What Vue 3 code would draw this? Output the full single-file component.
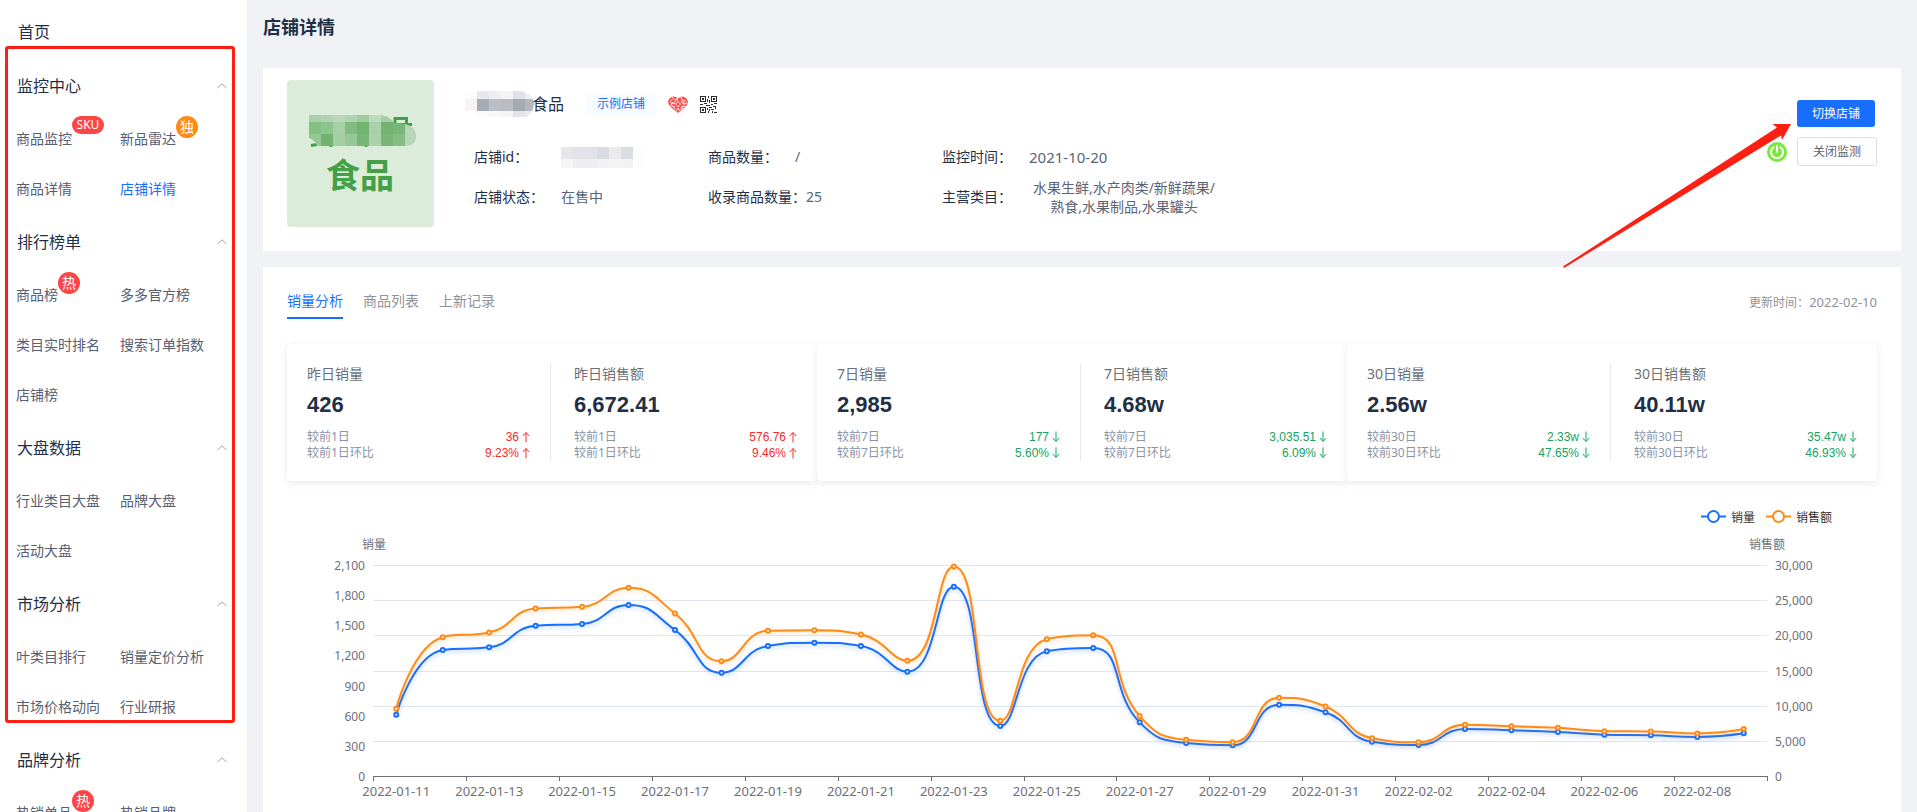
<script setup>
import { computed, onBeforeUnmount, onMounted, ref } from 'vue'

const menu = [
  {
    title: '监控中心',
    items: [
      { text: '商品监控', badge: 'SKU', kind: 'sku' },
      { text: '新品雷达', badge: '独', kind: 'solo' },
      { text: '商品详情' },
      { text: '店铺详情', active: true },
    ],
  },
  {
    title: '排行榜单',
    items: [
      { text: '商品榜', badge: '热', kind: 'hot' },
      { text: '多多官方榜' },
      { text: '类目实时排名' },
      { text: '搜索订单指数' },
      { text: '店铺榜' },
    ],
  },
  { title: '大盘数据', items: [{ text: '行业类目大盘' }, { text: '品牌大盘' }, { text: '活动大盘' }] },
  {
    title: '市场分析',
    items: [{ text: '叶类目排行' }, { text: '销量定价分析' }, { text: '市场价格动向' }, { text: '行业研报' }],
  },
  { title: '品牌分析', items: [{ text: '热销单品', badge: '热', kind: 'hot' }, { text: '热销品牌' }] },
]

const tabs = ['销量分析', '商品列表', '上新记录']
const activeTab = ref(0)

const stat = (name, value, period, diff, rate, up) => ({ name, value, period, diff, rate, up })
const statCards = [
  [
    stat('昨日销量', '426', '较前1日', '36', '9.23%', true),
    stat('昨日销售额', '6,672.41', '较前1日', '576.76', '9.46%', true),
  ],
  [
    stat('7日销量', '2,985', '较前7日', '177', '5.60%', false),
    stat('7日销售额', '4.68w', '较前7日', '3,035.51', '6.09%', false),
  ],
  [
    stat('30日销量', '2.56w', '较前30日', '2.33w', '47.65%', false),
    stat('30日销售额', '40.11w', '较前30日', '35.47w', '46.93%', false),
  ],
]

/* Pixelated masks: rows of [y, height, colours], 12px per cell */
const avatarMask = [
  [35, 7, ['#a9d0a9', '#b0d3b0', '#b9d8b9', '#b0d3b0', '#a0cba0', '#bddbbd', '#a6cfa6', '#dcecdb00', '#dcecdb00']],
  [42, 12, ['#85bf85', '#8dc38d', '#a6cfa6', '#80bb80', '#72b372', '#a9d1a9', '#72b372', '#78b678', '#b5d7b5']],
  [54, 12, ['#93c893', '#72b372', '#a3cfa3', '#96c796', '#78b678', '#aad3aa', '#78b678', '#85bd85', '#b5d7b5']],
]
const nameMask = [
  [0, 8, ['#fdfcfc', '#e6e8ee', '#eeeff2', '#f4f4f6', '#dfe2e9', '#eceef0']],
  [8, 12, ['#f7f2ef', '#a7acb4', '#bbbec4', '#b9bcc2', '#a5a9b2', '#b5b8bf']],
  [20, 6, ['#ffffff', '#fbfbfc', '#f7f7f8', '#f5f5f6', '#e3e4e8', '#e9eaed']],
]
const idMask = [
  [0, 12, ['#e8e6ea', '#e2e2e8', '#e2e3e9', '#d9dbe3', '#eaeaee', '#dcdce4', '#fbfcfc']],
  [12, 9, ['#f6f6f7', '#eeeef1', '#f0ecef', '#f1f1f4', '#f5f2f4', '#f2f2f4', '#fdfefd']],
]

/* Chart */
const chartBox = ref(null)
const width = ref(1590)
let observer
onMounted(() => {
  const measure = () => (width.value = chartBox.value.clientWidth)
  measure()
  observer = new ResizeObserver(measure)
  observer.observe(chartBox.value)
})
onBeforeUnmount(() => observer && observer.disconnect())

const TOP = 84
const BOTTOM = 295
const LEFT = 86
const right = computed(() => width.value - 110)
const band = computed(() => (right.value - LEFT) / 30)

const sales = [
  615, 1259, 1286, 1501, 1518, 1707, 1458, 1033, 1299, 1332, 1299, 1043, 1889, 503, 1246, 1279, 539, 333, 310, 714,
  639, 346, 314, 473, 460, 443, 416, 410, 393, 430,
]
const revenue = [
  9620, 19810, 20470, 23890, 24130, 26820, 23180, 16400, 20710, 20800, 20190, 16450, 29860, 7910, 19530, 20100, 8590,
  5210, 4880, 11180, 9950, 5450, 4880, 7350, 7160, 6920, 6450, 6400, 6120, 6740,
]
const scale = (list, max) =>
  list.map((v, i) => ({ x: LEFT + band.value * (i + 0.5), y: BOTTOM + 0.5 - (v / max) * (BOTTOM - TOP) }))

const clamp = (v, a, b) => Math.max(Math.min(v, Math.max(a, b)), Math.min(a, b))
function smoothPath(pts) {
  let d = `M${pts[0].x} ${pts[0].y}`
  let c0 = pts[0]
  for (let i = 1; i < pts.length; i++) {
    const prev = pts[i - 1]
    const p = pts[i]
    const next = pts[i + 1]
    let c1 = p
    let nextC0 = p
    if (next) {
      const lenPrev = Math.hypot(p.x - prev.x, p.y - prev.y)
      const lenNext = Math.hypot(next.x - p.x, next.y - p.y)
      const ratio = (0.5 * lenNext) / (lenNext + lenPrev)
      const nx = clamp(p.x + (next.x - prev.x) * ratio, next.x, p.x)
      const ny = clamp(p.y + (next.y - prev.y) * ratio, next.y, p.y)
      c1 = {
        x: clamp(p.x - ((nx - p.x) * lenPrev) / lenNext, prev.x, p.x),
        y: clamp(p.y - ((ny - p.y) * lenPrev) / lenNext, prev.y, p.y),
      }
      nextC0 = {
        x: p.x + ((p.x - c1.x) * lenNext) / lenPrev,
        y: p.y + ((p.y - c1.y) * lenNext) / lenPrev,
      }
    }
    d += `C${c0.x} ${c0.y} ${c1.x} ${c1.y} ${p.x} ${p.y}`
    c0 = nextC0
  }
  return d
}
const series = computed(() => [
  { key: 'blue', color: '#176eff', pts: scale(sales, 2100) },
  { key: 'orange', color: '#ff8a14', pts: scale(revenue, 30000) },
])
const leftTicks = Array.from({ length: 8 }, (_, i) => i * 300)
const rightTicks = Array.from({ length: 7 }, (_, i) => i * 5000)
const fmt = (n) => n.toLocaleString('en-US')
const dates = Array.from({ length: 15 }, (_, i) =>
  new Date(Date.UTC(2022, 0, 11 + i * 2)).toISOString().slice(0, 10),
)
</script>

<template>
  <div class="app">
    <aside class="sidebar">
      <a class="home" href="#">首页</a>
      <nav v-for="group in menu" :key="group.title" class="group">
        <button class="group-title" type="button">
          <span>{{ group.title }}</span>
          <svg class="chevron" viewBox="0 0 10 6" aria-hidden="true"><path d="M0.5 5 5 0.8 9.5 5" /></svg>
        </button>
        <ul class="items">
          <li v-for="item in group.items" :key="item.text">
            <a href="#" :class="{ active: item.active }">
              {{ item.text }}<span v-if="item.badge" class="badge" :class="item.kind">{{ item.badge }}</span>
            </a>
          </li>
        </ul>
      </nav>
      <div class="highlight" aria-hidden="true"></div>
    </aside>

    <main class="main">
      <h1>店铺详情</h1>

      <section class="card shop">
        <svg class="avatar" viewBox="0 0 147 147" role="img" aria-label="食品">
          <defs>
            <clipPath id="avatarClip">
              <path d="M22 35h72q9 1 13 8 14 0 19 5 5 6 2 14-4 4-10 4H30q-2-6-8-8z" />
            </clipPath>
          </defs>
          <rect width="147" height="147" fill="#dcecdb" />
          <g fill="none" stroke="#43a047" stroke-width="3">
            <path d="M108 38.5h11.500v6H108zM118 44.500h7M24 65.500l6-1M44 63v4M54 64v2M79 63v4" />
          </g>
          <g clip-path="url(#avatarClip)">
            <template v-for="row in avatarMask" :key="row[0]">
              <rect
                v-for="(c, i) in row[2]" :key="i" :x="22 + i * 12" :y="row[0]" width="12" :height="row[1]" :fill="c"
                shape-rendering="crispEdges"
              />
            </template>
          </g>
          <text x="73" y="108" class="avatar-text">食品</text>
        </svg>

        <div class="info">
          <div class="name-row">
            <svg class="name-mask" viewBox="0 0 69 26" aria-hidden="true">
              <defs>
                <clipPath id="nameClip"><path d="M0 4q0-4 4-4h52q11 2 13 12 0 9-7 14H12V20H0z" /></clipPath>
              </defs>
              <g clip-path="url(#nameClip)">
                <template v-for="row in nameMask" :key="row[0]">
                  <rect
                    v-for="(c, i) in row[2]" :key="i" :x="i * 12" :y="row[0]" width="12" :height="row[1]" :fill="c"
                    shape-rendering="crispEdges"
                  />
                </template>
              </g>
            </svg>
            <span class="name">食品</span>
            <span class="tag">示例店铺</span>
            <svg class="heart" viewBox="0 0 20 17" aria-hidden="true">
              <defs><clipPath id="heartClip"><path d="M10 17 2 10.500Q-1.500 6 1.500 2.500 5.500-1.500 10 2.500 14.500-1.500 18.500 2.500 21.500 6 18 10.500z" /></clipPath></defs>
              <g clip-path="url(#heartClip)">
                <rect width="20" height="17" fill="#fb5050" />
                <g stroke="#fff" stroke-width="1" fill="none" opacity=".85">
                  <path d="M4 1l3 3 3-1M2 6l4 2 1-3M1 10l4 0 2 3M9 1v4M13 1l1 3 4 1M19 7l-4 1-2-3M18 11l-4-1-1 4M8 15l2-3 2 3M4.500 3.500l-2 1M10 5.500l-2.500 2.500 2.500 3 2.500-3zM5 6l-2 3M15 5l2 4M7 11l-2-1M13 11l3 2" />
                </g>
                <rect x="9" y="7" width="2" height="2" fill="#fb5050" />
              </g>
            </svg>
            <svg class="qr" viewBox="0 0 17 17" shape-rendering="crispEdges" aria-hidden="true">
              <g fill="none" stroke="#2b2b2b">
                <path d="M.5.500h5v5h-5zM11.500.500h5v5h-5zM.5 11.500h5v5h-5z" />
                <path d="M8.500 0v2M7.500 3v3M9.500 4v3M0 8.500h3M4 7.500h3M6 9.500h4M11 8.500h2M14 7.500h3M9 11.500h3M7.500 12v2M8.500 15v2M11 13.500h3M12.500 15v2M15.500 10v3M14 16.500h3M9.500 13v2M13 10.500h2" stroke-width="1" />
              </g>
              <path fill="#2b2b2b" d="M2 2h2v2H2zM13 2h2v2h-2zM2 13h2v2H2z" />
            </svg>
          </div>

          <dl class="facts">
            <div>
              <dt>店铺id：</dt>
              <dd>
                <svg class="id-mask" viewBox="0 0 84 21" aria-hidden="true">
                  <template v-for="row in idMask" :key="row[0]">
                    <rect
                      v-for="(c, i) in row[2]" :key="i" :x="i * 12" :y="row[0]" width="12" :height="row[1]" :fill="c"
                      shape-rendering="crispEdges"
                    />
                  </template>
                </svg>
              </dd>
            </div>
            <div><dt>商品数量：</dt><dd>/</dd></div>
            <div><dt>监控时间：</dt><dd class="date">2021-10-20</dd></div>
            <div><dt>店铺状态：</dt><dd>在售中</dd></div>
            <div><dt>收录商品数量：</dt><dd>25</dd></div>
            <div><dt>主营类目：</dt><dd class="category">水果生鲜,水产肉类/新鲜蔬果/<wbr />熟食,水果制品,水果罐头</dd></div>
          </dl>
        </div>

        <div class="actions">
          <button class="primary" type="button">切换店铺</button>
          <svg class="power" viewBox="0 0 20 20" aria-hidden="true">
            <circle cx="10" cy="10" r="10" fill="#7be83c" />
            <g fill="none" stroke="#fff" stroke-width="2" stroke-linecap="round">
              <path d="M6.500 5.200a6 6 0 1 0 7 0M10 3.800v6" />
            </g>
          </svg>
          <button class="plain" type="button">关闭监测</button>
        </div>

        <svg class="arrow" viewBox="0 0 228 144" aria-hidden="true">
          <path d="M228 0 219 16 218 11.500 1 144 0 142.500 214 3.500 209.500 0z" fill="#ff1f12" />
        </svg>
      </section>

      <section class="card analysis">
        <div class="tabs-row">
          <div class="tabs" role="tablist">
            <button
              v-for="(tab, i) in tabs" :key="tab" type="button" role="tab" :aria-selected="activeTab === i"
              :class="{ on: activeTab === i }" @click="activeTab = i"
            >{{ tab }}</button>
          </div>
          <span class="updated">更新时间：<span class="updated-date">2022-02-10</span></span>
        </div>

        <div class="stats">
          <div v-for="(pair, i) in statCards" :key="i" class="stat-card">
            <div v-for="s in pair" :key="s.name" class="stat">
              <div class="stat-name">{{ s.name }}</div>
              <div class="stat-value">{{ s.value }}</div>
              <div v-for="(v, k) in [s.diff, s.rate]" :key="k" class="stat-row">
                <span>{{ s.period }}{{ k ? '环比' : '' }}</span>
                <span class="delta" :class="s.up ? 'up' : 'down'">
                  {{ v }}
                  <svg viewBox="0 0 8 12" aria-hidden="true">
                    <path v-if="s.up" d="M4 11.500V1.500M.8 5 4 1.500 7.200 5" />
                    <path v-else d="M4 .5v10M.8 7 4 10.500 7.200 7" />
                  </svg>
                </span>
              </div>
            </div>
          </div>
        </div>

        <div ref="chartBox" class="chart">
          <svg :width="width" height="331" role="img" aria-label="销量与销售额">
            <g class="legend">
              <g stroke="#176eff">
                <path :d="`M${width - 176} 35.500h25`" /><circle :cx="width - 163.5" cy="35.500" r="5.500" />
              </g>
              <text :x="width - 146" y="41">销量</text>
              <g stroke="#ff8a14">
                <path :d="`M${width - 111} 35.500h25`" /><circle :cx="width - 98.5" cy="35.500" r="5.500" />
              </g>
              <text :x="width - 81" y="41">销售额</text>
            </g>

            <g class="axis-text">
              <text :x="LEFT + 1" y="68" text-anchor="middle">销量</text>
              <text :x="right" y="68" text-anchor="middle">销售额</text>
              <text
                v-for="(t, i) in leftTicks" :key="'l' + t" :x="LEFT - 8" :y="BOTTOM + 5 - (i * (BOTTOM - TOP)) / 7"
                text-anchor="end"
              >{{ fmt(t) }}</text>
              <text
                v-for="(t, i) in rightTicks" :key="'r' + t" :x="right + 8"
                :y="BOTTOM + 5 - (i * (BOTTOM - TOP)) / 6"
              >{{ fmt(t) }}</text>
              <text
                v-for="(d, i) in dates" :key="d" class="date-label" :x="LEFT + band * (2 * i + 0.5)" y="315"
                text-anchor="middle"
              >{{ d }}</text>
            </g>

            <path
              v-for="i in 6" :key="'g' + i" class="grid-line"
              :d="`M${LEFT} ${Math.round(BOTTOM - (i * (BOTTOM - TOP)) / 6) + 0.5}H${right}`"
            />
            <path class="axis-line" :d="`M${LEFT} ${BOTTOM + 0.5}H${right + 1}`" />
            <path
              v-for="i in 16" :key="'t' + i" class="axis-line"
              :d="`M${Math.round(LEFT + band * 2 * (i - 1)) + 0.5} ${BOTTOM}v5`"
            />

            <g v-for="s in series" :key="s.key" :stroke="s.color" stroke-width="2">
              <path :class="['line', s.key]" :d="smoothPath(s.pts)" />
              <circle v-for="(p, i) in s.pts" :key="i" :cx="p.x" :cy="p.y" r="2" fill="#fff" />
            </g>
          </svg>
        </div>
      </section>
    </main>
  </div>
</template>

<style>
body {
  background: #f0f2f5;
}
</style>

<style scoped>
.app {
  display: flex;
  height: 100vh;
  overflow: hidden;
  background: #f0f2f5;
  color: #1f2f46;
  font-family: "Noto Sans", "Noto Sans CJK SC", sans-serif;
  font-size: 14px;
  line-height: 20px;
}
.app * {
  box-sizing: border-box;
}
button {
  font: inherit;
  color: inherit;
  background: none;
  border: 0;
  padding: 0;
  cursor: pointer;
}
a {
  color: inherit;
  text-decoration: none;
}

/* Sidebar */
.sidebar {
  position: relative;
  flex: none;
  width: 247px;
  background: #fff;
}
.home {
  display: block;
  height: 58px;
  padding: 22px 18px 0;
  font-size: 16px;
}
.group-title {
  display: flex;
  align-items: center;
  justify-content: space-between;
  width: 100%;
  height: 56px;
  padding: 0 20px 0 17px;
  font-size: 16px;
}
.chevron {
  width: 10px;
  height: 6px;
  fill: none;
  stroke: #a0a2a8;
}
.items {
  display: grid;
  grid-template-columns: 104px 104px;
  margin: 0;
  padding: 0 0 0 16px;
  list-style: none;
  color: #566073;
}
.items li {
  display: flex;
  align-items: center;
  height: 50px;
  white-space: nowrap;
}
.items a {
  position: relative;
}
.items .active {
  color: #176eff;
}
.badge {
  position: absolute;
  left: 100%;
  top: -13px;
  width: 22px;
  height: 22px;
  border-radius: 11px;
  background: #fc4545;
  color: #fff;
  font-size: 14px;
  line-height: 22px;
  text-align: center;
}
.badge.sku {
  width: 32px;
  height: 18px;
  font-size: 12px;
  line-height: 18px;
}
.badge.solo {
  background: #ff8a14;
}
.highlight {
  position: absolute;
  left: 5px;
  right: 12px;
  top: 46px;
  height: 677px;
  border: 3px solid #ff1f12;
  border-radius: 3px;
  pointer-events: none;
}

/* Main */
.main {
  flex: 1;
  min-width: 0;
  padding: 0 16px;
}
h1 {
  margin: 0;
  height: 68px;
  padding-top: 15px;
  font-size: 18px;
  line-height: 24px;
  font-weight: 700;
}
.card {
  background: #fff;
}

/* Shop card */
.shop {
  position: relative;
  display: flex;
  padding: 12px 24px 24px;
}
.avatar {
  flex: none;
  width: 147px;
  height: 147px;
  border-radius: 4px;
}
.avatar-text {
  fill: #43a047;
  font-size: 34px;
  font-weight: 700;
  text-anchor: middle;
}
.info {
  flex: 1;
  min-width: 0;
  margin-left: 31px;
  padding-top: 9px;
}
.name-row {
  display: flex;
  align-items: center;
  height: 30px;
}
.name-mask {
  flex: none;
  width: 69px;
  height: 26px;
  margin-right: -2px;
  z-index: 1;
}
.name {
  font-size: 16px;
}
.tag {
  width: 70px;
  height: 22px;
  margin-left: 22px;
  background: #f6fbff;
  color: #176eff;
  font-size: 12px;
  line-height: 22px;
  text-align: center;
}
.heart {
  width: 20px;
  height: 17px;
  margin-left: 12px;
}
.qr {
  width: 17px;
  height: 17px;
  margin-left: 12px;
}
.facts {
  display: grid;
  grid-template-columns: 234px 234px 280px;
  grid-auto-rows: 40px;
  margin: 18px 0 0;
  padding-left: 9px;
}
.facts div {
  display: flex;
  align-items: center;
}
dt {
  flex: none;
  min-width: 87px;
}
dd {
  margin: 0;
  color: #5b6475;
}
dd.date {
  font-size: 15px;
}
.id-mask {
  display: block;
  width: 84px;
  height: 21px;
}
.category {
  width: 190px;
  line-height: 19px;
  text-align: center;
}
.actions {
  display: grid;
  grid-template-columns: 20px 80px;
  gap: 10px;
  align-content: start;
  align-items: center;
  margin-top: 20px;
  font-size: 12px;
}
.primary {
  grid-column: 2;
  width: 78px;
  height: 27px;
  border-radius: 3px;
  background: #176eff;
  color: #fff;
}
.plain {
  height: 29px;
  border: 1px solid #dcdfe6;
  border-radius: 3px;
  color: #5b6475;
}
.power {
  width: 20px;
  height: 20px;
}
.arrow {
  position: absolute;
  right: 110px;
  top: 56px;
  width: 228px;
  height: 144px;
  z-index: 2;
  pointer-events: none;
}

/* Analysis card */
.analysis {
  margin-top: 16px;
  padding: 23px 24px 0;
}
.tabs-row {
  display: flex;
  justify-content: space-between;
  align-items: flex-start;
}
.tabs {
  display: flex;
  gap: 20px;
}
.tabs button {
  padding-bottom: 5px;
  border-bottom: 2px solid transparent;
  color: #8f9299;
  line-height: 22px;
}
.tabs .on {
  border-bottom-color: #176eff;
  color: #176eff;
}
.updated {
  color: #8f9299;
  font-size: 12px;
  line-height: 24px;
}
.updated-date {
  font-size: 13px;
}
.stats {
  display: flex;
  margin-top: 25px;
}
.stat-card {
  flex: 1;
  display: flex;
  padding: 20px;
  border-radius: 4px;
  background: #fff;
  box-shadow: 0 2px 8px rgba(0, 0, 0, 0.09);
}
.stat {
  flex: 1 1 0;
}
.stat:first-child {
  padding-right: 20px;
  border-right: 1px solid #e8e9ec;
}
.stat:last-child {
  padding-left: 23px;
}
.stat-name {
  color: #6b7078;
}
.stat-value {
  margin: 7px 0 10px;
  font: 700 22px/28px "Liberation Sans", sans-serif;
}
.stat-row {
  display: flex;
  justify-content: space-between;
  color: #8a94a8;
  font-size: 12px;
  line-height: 16px;
}
.delta {
  display: flex;
  align-items: center;
  gap: 3px;
  font-family: "Liberation Sans", sans-serif;
}
.delta svg {
  width: 8px;
  height: 12px;
  fill: none;
  stroke: currentColor;
}
.up {
  color: #fa2828;
}
.down {
  color: #15a364;
}

/* Chart */
.chart svg {
  display: block;
}
.legend {
  fill: #333;
  font-size: 12px;
  stroke-width: 2;
}
.legend circle {
  fill: #fff;
}
.axis-text {
  fill: #6e7079;
  font-size: 12px;
}
.date-label {
  font-size: 13px;
}
.grid-line {
  stroke: #e0e6f1;
}
.axis-line {
  stroke: #6e7079;
}
.line {
  fill: none;
}
.line.blue {
  filter: drop-shadow(0 2px 2px rgba(23, 110, 255, 0.3));
}
.line.orange {
  filter: drop-shadow(0 2px 2px rgba(255, 138, 20, 0.3));
}
</style>
